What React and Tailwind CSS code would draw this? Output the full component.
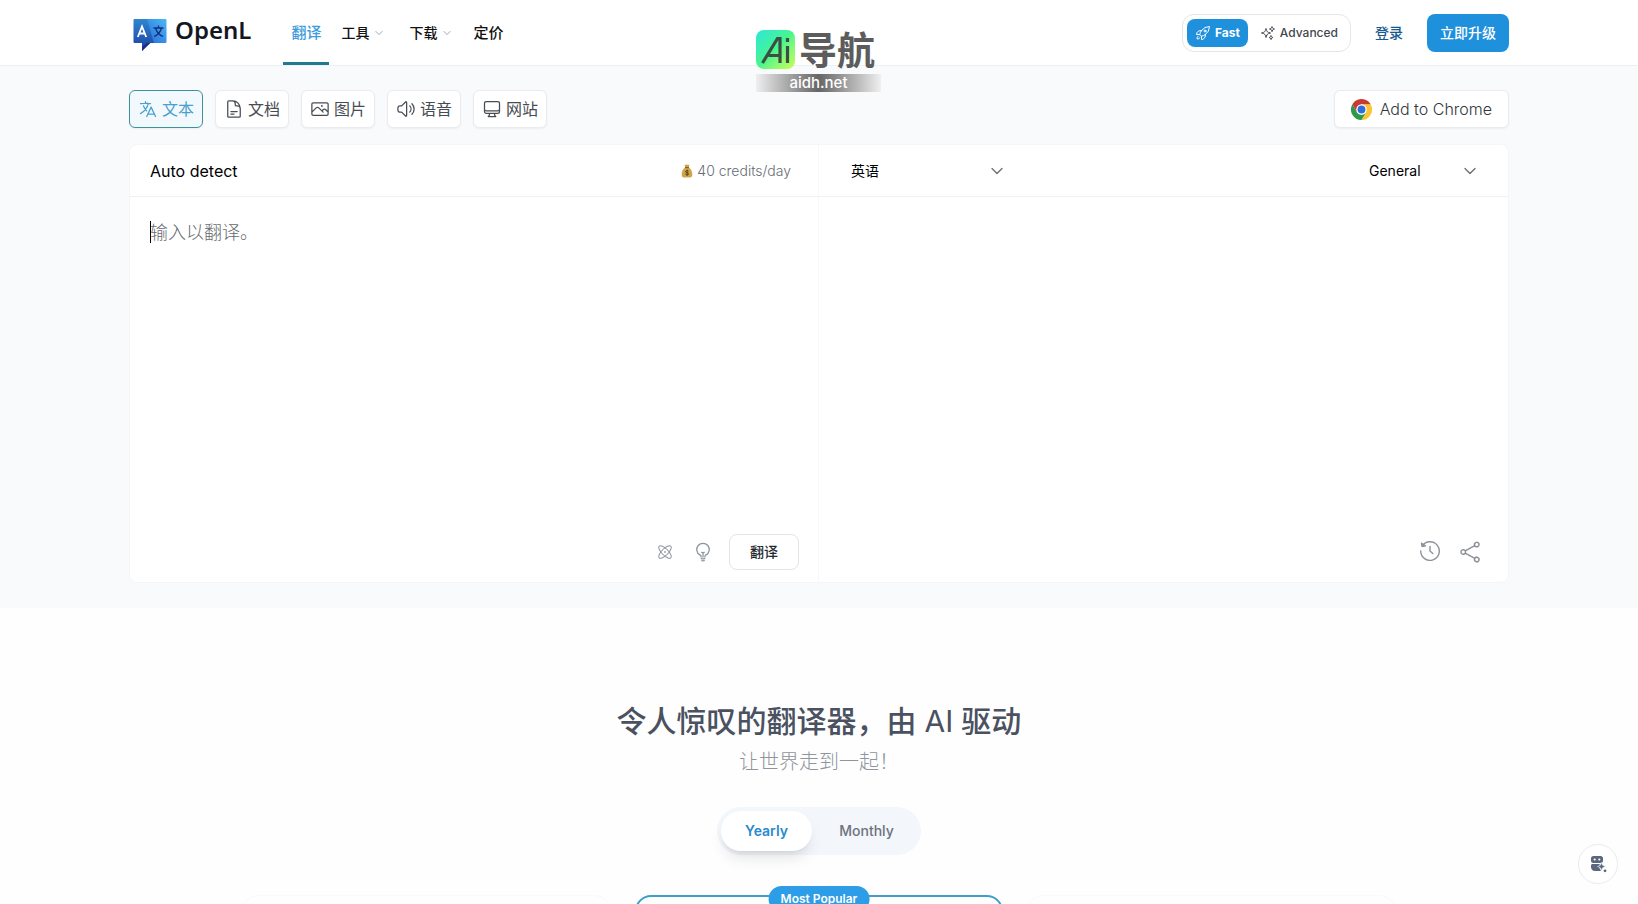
import React, { useState } from 'react'
import {
  HiOutlineLanguage,
  HiOutlineDocumentText,
  HiOutlinePhoto,
  HiOutlineSpeakerWave,
  HiOutlineComputerDesktop,
  HiOutlineRocketLaunch,
  HiOutlineSparkles,
  HiOutlineChevronDown,
  HiOutlineLightBulb,
  HiOutlineShare
} from 'react-icons/hi2'

const tabs = [
  { id: 'text', label: '文本', Icon: HiOutlineLanguage },
  { id: 'doc', label: '文档', Icon: HiOutlineDocumentText },
  { id: 'image', label: '图片', Icon: HiOutlinePhoto },
  { id: 'speech', label: '语音', Icon: HiOutlineSpeakerWave },
  { id: 'site', label: '网站', Icon: HiOutlineComputerDesktop }
]

function Logo() {
  return (
    <svg width="34" height="34" viewBox="0 0 34 34" aria-hidden="true">
      <defs>
        <linearGradient id="logoLeft" x1="0" y1="0" x2="0" y2="1">
          <stop offset="0" stopColor="#2f86cf" />
          <stop offset="1" stopColor="#1b3fa0" />
        </linearGradient>
        <linearGradient id="logoRight" x1="1" y1="0" x2="0" y2="1">
          <stop offset="0" stopColor="#4db8f5" />
          <stop offset="1" stopColor="#2569da" />
        </linearGradient>
      </defs>
      <path d="M12 1h20.500a1 1 0 0 1 1 1v22a1 1 0 0 1-1 1H20z" fill="url(#logoRight)" />
      <path d="M1.500 1H14l7 24h-4.500L9 33v-8H1.500a1 1 0 0 1-1-1V2a1 1 0 0 1 1-1z" fill="url(#logoLeft)" />
      <path d="M14 25h3.500L9 33v-4z" fill="#1c2f86" />
      <path d="M4.800 19 9 8.500 13.200 19M6.300 15.500h5.400" fill="none" stroke="#fff" strokeWidth="1.800" />
      <path d="M20.500 10h10M25.500 7.500V10M28.500 10c-1 4-4 7-7.500 8.500M22.500 10c1 4 4 7 7.500 8.500" fill="none" stroke="#12307c" strokeWidth="1.300" />
    </svg>
  )
}

function ChromeIcon() {
  return (
    <svg width="21" height="21" viewBox="0 0 48 48" aria-hidden="true">
      <path d="M24 12h20.800A24 24 0 0 1 24 48l10.400-18z" fill="#fbc631" />
      <path d="M3.200 12 13.600 30 24 36l10.400-6L24 48A24 24 0 0 1 3.200 12z" fill="#2c9a48" />
      <path d="M3.200 12A24 24 0 0 1 44.800 12H24l-10.400 18z" fill="#c93a32" />
      <circle cx="24" cy="24" r="12" fill="#fff" />
      <circle cx="24" cy="24" r="9" fill="#2f6fdd" />
    </svg>
  )
}

function MoneyBag() {
  return (
    <svg width="12" height="14" viewBox="0 0 12 14" aria-hidden="true">
      <path d="M3.500.600 5 1l1-.700L7 1l1.500-.400L7.800 3.600C10 5 11.500 8 11.300 11c-.100 1.700-1 2.500-2.500 2.500H3.200C1.700 13.500.800 12.700.700 11 .500 8 2 5 4.200 3.600z" fill="#cda44a" />
      <path d="M4 3.600h4" stroke="#7a5a20" strokeWidth="1" />
      <path d="M7.600 7.300C7 6.300 4.600 6.400 4.600 7.700c0 1.500 3 .700 3 2.200 0 1.300-2.600 1.300-3.200.200M6.100 5.700v5.900" fill="none" stroke="#5e4413" strokeWidth="1" />
    </svg>
  )
}

function AtomIcon() {
  return (
    <svg width="14" height="14" viewBox="0 0 24 24" fill="none" stroke="currentColor" strokeWidth="1.700" aria-hidden="true">
      <ellipse cx="12" cy="12" rx="14" ry="5.500" transform="rotate(45 12 12)" />
      <ellipse cx="12" cy="12" rx="14" ry="5.500" transform="rotate(-45 12 12)" />
      <circle cx="12" cy="12" r="0.800" fill="currentColor" />
    </svg>
  )
}

function HistoryIcon() {
  return (
    <svg width="22" height="22" viewBox="0 0 22 22" fill="none" stroke="currentColor" strokeWidth="1.400" strokeLinecap="round" aria-hidden="true">
      <path d="M3.200 6A9.300 9.300 0 1 1 1.700 11" />
      <path d="M2.300 3.200 3 6.800l3.700-.900z" fill="currentColor" strokeLinejoin="round" strokeWidth="1" />
      <path d="M11 6.500V11l2.800 2.500" />
    </svg>
  )
}

function BotIcon() {
  return (
    <svg width="18" height="18" viewBox="0 0 18 18" fill="#5b677c" aria-hidden="true">
      <path d="M4.500 1h7A2.500 2.500 0 0 1 14 3.500v2A2.500 2.500 0 0 1 11.500 8h-7A2.500 2.500 0 0 1 2 5.500v-2A2.500 2.500 0 0 1 4.500 1z" />
      <circle cx="5.700" cy="4.500" r="1.100" fill="#fff" />
      <circle cx="10.300" cy="4.500" r="1.100" fill="#fff" />
      <path d="M2 10.500C2 9.700 2.700 9 3.500 9H11l-1.500 2.500L11 14l1 2H6c-2.500 0-4-2-4-4z" />
      <path d="m12.500 7.500 1.200 2.800 2.800 1.200-2.800 1.200-1.200 2.800-1.200-2.800-2.800-1.200 2.800-1.200z" stroke="#fff" strokeWidth=".500" />
      <circle cx="16" cy="15.800" r="1.400" />
    </svg>
  )
}

function Watermark() {
  return (
    <div className="pointer-events-none absolute left-1/2 top-[30px] z-10 ml-[-63px] w-[125px]">
      <div className="flex items-center gap-1">
        <div className="flex size-[39px] items-center justify-center rounded-lg bg-linear-to-br from-[#2fe6d6] via-[#48f58c] to-[#c4ff4a]">
          <svg width="30" height="28" viewBox="0 0 30 28" fill="none" stroke="#3b4f45" strokeWidth="3.200" aria-hidden="true">
            <path d="M1.500 27 16.500 2.500h2.500V27M7.500 19.500H19" />
            <path d="M26.500 10v17M26.500 2v4" />
          </svg>
        </div>
        <span className="text-[38px] font-bold leading-[38px] text-[#5c5c5c]">导航</span>
      </div>
      <div className="mt-[5px] h-[18px] bg-linear-to-r from-[#f0f0f0] via-[#666] to-[#f0f0f0] text-center text-[15px] font-medium leading-[18px] text-white">
        aidh.net
      </div>
    </div>
  )
}

function Header({ mode, setMode }) {
  return (
    <header className="border-b border-[#eceff3] bg-white">
      <div className="mx-auto flex h-[65px] max-w-[1380px] items-center justify-between">
        <div className="flex h-full items-center">
          <a href="#" className="ml-1 flex items-start gap-2 text-[#14171f]">
            <span className="mt-1"><Logo /></span>
            <span className="font-['Noto_Sans'] text-2xl font-semibold">OpenL</span>
          </a>
          <nav className="ml-8 flex h-full items-center text-sm font-medium text-[#111]">
            <a href="#" className="flex h-full items-center border-b-[3px] border-[#217a90] px-2 pt-[3px] text-[15px] text-[#3f9bdc]">翻译</a>
            <button className="ml-3 flex items-center gap-[5px] font-medium">
              工具 <HiOutlineChevronDown className="size-[10px] text-gray-500" />
            </button>
            <button className="ml-[25px] flex items-center gap-[5px] font-medium">
              下载 <HiOutlineChevronDown className="size-[10px] text-gray-500" />
            </button>
            <a href="#" className="ml-[21px] text-[15px]">定价</a>
          </nav>
        </div>

        <div className="flex items-center text-sm font-medium">
          <div className="flex h-[38px] items-center rounded-xl border border-[#e3e6ea] p-1 text-xs">
            <button
              onClick={() => setMode('fast')}
              aria-pressed={mode === 'fast'}
              className="flex h-7 items-center gap-1 rounded-lg bg-[#1f90dc] px-2 font-bold text-white"
            >
              <HiOutlineRocketLaunch className="size-4" /> Fast
            </button>
            <button
              onClick={() => setMode('advanced')}
              aria-pressed={mode === 'advanced'}
              className="flex h-7 items-center gap-1 px-3 pr-2 font-medium text-[#43474f]"
            >
              <HiOutlineSparkles className="size-4" /> Advanced
            </button>
          </div>
          <a href="#" className="ml-6 text-[#195a8c]">登录</a>
          <button className="ml-6 h-[38px] rounded-lg bg-[#1f90dc] px-[13px] font-medium text-white">立即升级</button>
        </div>
      </div>
    </header>
  )
}

function Select({ label, value, className }) {
  return (
    <label className={'relative flex items-center ' + className}>
      <span className="absolute size-0 overflow-hidden opacity-0" aria-hidden="true" />
      <select
        aria-label={label}
        className="h-10 w-full appearance-none bg-transparent text-sm text-black outline-none"
        defaultValue={value}
      >
        <option>{value}</option>
      </select>
      <HiOutlineChevronDown className="pointer-events-none absolute right-0 size-4 stroke-2 text-[#6b7076]" />
    </label>
  )
}

function Translator() {
  const [text, setText] = useState('')

  return (
    <div className="mt-4 grid grid-cols-2 rounded-lg border border-[#f5f6f8] bg-white">
      <div className="border-r border-[#f6f7f9]">
        <div className="flex h-[52px] items-center justify-between border-b border-[#f0f1f3] pl-5 pr-[27px]">
          <span className="text-base text-black">Auto detect</span>
          <span className="flex items-center gap-1 text-sm font-light text-[#666c73]">
            <MoneyBag /> 40 credits/day
          </span>
        </div>
        <div className="relative">
          <textarea
            aria-label="输入以翻译。"
            placeholder="输入以翻译。"
            value={text}
            onChange={e => setText(e.target.value)}
            className="block h-[337px] w-full resize-none px-5 pt-[22px] text-lg font-light leading-7 outline-none placeholder:text-[#65696e]"
          />
          <span className="absolute left-5 top-6 h-[22px] w-px bg-black" />
        </div>
        <div className="flex h-12 items-start justify-end pr-[19px] text-[#8d949e]">
          <button aria-label="Model" className="mt-[11px]"><AtomIcon /></button>
          <button aria-label="Tips" className="ml-[21px] mt-2"><HiOutlineLightBulb className="size-5" /></button>
          <button className="ml-4 h-9 w-[70px] rounded-lg border border-[#e2e5e9] text-sm font-medium text-[#23272e]">翻译</button>
        </div>
      </div>

      <div className="flex flex-col">
        <div className="flex h-[52px] items-center justify-between border-b border-[#f0f1f3] pl-8 pr-[30px]">
          <Select label="Target language" value="英语" className="w-[154px]" />
          <Select label="Style" value="General" className="w-[109px]" />
        </div>
        <div className="flex-1" />
        <div className="flex h-12 items-start justify-end gap-[17px] pr-[26px] pt-[6px] text-[#8e9298]">
          <button aria-label="History"><HistoryIcon /></button>
          <button aria-label="Share"><HiOutlineShare className="size-6" /></button>
        </div>
      </div>
    </div>
  )
}

function Pricing() {
  const [cycle, setCycle] = useState('yearly')

  return (
    <section className="flex flex-col items-center pt-[93px]">
      <h1 className="text-[30px] font-medium leading-10 text-[#4a5160]">
        令人惊叹的翻译器，由 <span className="font-normal">AI</span> 驱动
      </h1>
      <p className="mt-[5px] text-xl font-light leading-8 text-[#8f949d]">让世界走到一起！</p>

      <div className="mt-[29px] flex h-12 items-center rounded-full bg-[#f3f6fa] px-1 text-sm">
        <button
          onClick={() => setCycle('yearly')}
          aria-pressed={cycle === 'yearly'}
          className="h-10 w-[91px] rounded-full bg-white font-semibold text-[#2a8acb] shadow-lg"
        >
          Yearly
        </button>
        <button
          onClick={() => setCycle('monthly')}
          aria-pressed={cycle === 'monthly'}
          className="h-10 w-[105px] rounded-full pl-1 font-medium text-[#6b7280]"
        >
          Monthly
        </button>
      </div>

      <div className="mt-10 grid w-full max-w-[1154px] grid-cols-3 gap-6">
        <div className="h-40 rounded-2xl border border-[#f8f9fa]" />
        <div className="relative h-40 rounded-2xl border-2 border-[#3f9fcb]">
          <span className="absolute left-1/2 top-[-11px] -translate-x-1/2 whitespace-nowrap rounded-full bg-[#2c9de6] px-3 py-1 text-xs font-semibold leading-[18px] text-white">
            Most Popular
          </span>
        </div>
        <div className="h-40 rounded-2xl border border-[#f8f9fa]" />
      </div>
    </section>
  )
}

export default function App() {
  const [mode, setMode] = useState('fast')
  const [tab, setTab] = useState('text')

  return (
    <div className="relative h-screen overflow-hidden bg-[#fefefe] font-[Inter,'Noto_Sans_CJK_SC',sans-serif]">
      <Header mode={mode} setMode={setMode} />
      <Watermark />

      <main>
        <div className="bg-[#f9fafc] pb-[25px] pt-6">
          <div className="mx-auto max-w-[1380px]">
            <div className="flex items-center justify-between">
              <div className="flex gap-3">
                {tabs.map(({ id, label, Icon }) => (
                  <button
                    key={id}
                    onClick={() => setTab(id)}
                    className={
                      'flex h-[38px] w-[74px] items-center justify-center gap-1 rounded-md border text-base shadow-xs ' +
                      (tab === id
                        ? 'border-[#3d9399] bg-[#f2f9fd] text-[#4a9fd0]'
                        : 'border-[#e9ebee] bg-white text-[#484c53]')
                    }
                  >
                    <Icon className="size-5" />
                    {label}
                  </button>
                ))}
              </div>
              <a href="#" className="flex h-[38px] items-center gap-2 rounded-md border border-[#e9ebee] bg-white px-4 text-base font-light text-[#33373d] shadow-xs">
                <ChromeIcon /> Add to Chrome
              </a>
            </div>
            <Translator />
          </div>
        </div>
        <Pricing />
      </main>

      <button
        aria-label="Assistant"
        className="absolute bottom-5 right-5 flex size-10 items-center justify-center rounded-full border border-[#e8ebee] bg-white"
      >
        <BotIcon />
      </button>
    </div>
  )
}
